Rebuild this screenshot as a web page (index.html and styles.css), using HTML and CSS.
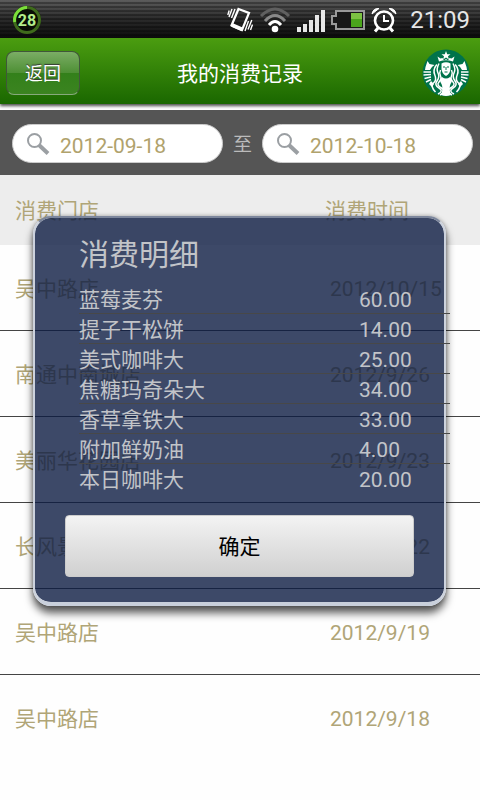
FILE: index.html
```html
<!DOCTYPE html>
<html lang="zh-CN">
<head>
<meta charset="utf-8">
<meta name="viewport" content="width=device-width, initial-scale=1">
<title>我的消费记录</title>
<link rel="stylesheet" href="styles.css">
</head>
<body>
<div class="status">
  <svg class="badge" width="30" height="30" viewBox="0 0 30 30" aria-hidden="true">
    <circle cx="15" cy="15" r="14" fill="#0a0d06"/>
    <circle cx="15" cy="15" r="12.500" fill="none" stroke="#3f6b1c" stroke-width="3"/>
    <path d="M2.700 17A12.500 12.500 0 0 1 15 2.500" fill="none" stroke="#7be03a" stroke-width="3"/>
    <text class="badge-text" x="15" y="21" text-anchor="middle">28</text>
  </svg>
  <div class="status-icons">
    <svg width="26" height="26" viewBox="0 0 26 26" fill="none" stroke="#fff" aria-hidden="true">
      <path d="M11.500 2L22 6L15 23L4.500 18.500Z" stroke-width="2.200"/>
      <path d="M5 18L15.500 22.500" stroke-width="4"/>
      <path d="M8 2L4.500 11M5 2L2 10M2.200 3.500L.8 8M24.800 13L21 22.500M25.500 17.500L23.500 23M21.500 14L18 24" stroke-width="1.400"/>
    </svg>
    <svg width="32" height="26" viewBox="0 0 32 26" fill="none" aria-hidden="true">
      <path d="M2 9Q16-5 30 9" stroke="#606060" stroke-width="3"/>
      <path d="M6 14Q16 3 26 14" stroke="#888" stroke-width="3"/>
      <path d="M10 18Q16 11 22 18" stroke="#fff" stroke-width="3"/>
      <circle cx="16" cy="22" r="3.300" fill="#fff"/>
    </svg>
    <svg width="28" height="26" viewBox="0 0 28 26" fill="#e8e8e8" aria-hidden="true">
      <path d="M0 20h4v5H0zM6 17h4v8H6zM12 13h4v12h-4zM18 8h4v17h-4zM24 3h4v22h-4z"/>
    </svg>
    <svg width="34" height="26" viewBox="0 0 34 26" aria-hidden="true">
      <path d="M5 4H33V22H5V17H1V9H5Z" fill="#181818" stroke="#999" stroke-width="2"/>
      <path d="M20 6H31V20H20Z" fill="#4ba51c"/><path d="M20 6H31V12H20Z" fill="#7cc243"/>
    </svg>
    <svg width="26" height="26" viewBox="0 0 26 26" fill="none" stroke="#fff" aria-hidden="true">
      <circle cx="13" cy="13.500" r="9" stroke-width="2.600"/>
      <path d="M13 8V14H18" stroke-width="2"/>
      <path d="M7.500 20.500L4 24.500M18.500 20.500L22 24.500" stroke-width="3"/>
      <path d="M1 7Q2 1 8 1.500ZM25 7Q24 1 18 1.500Z" fill="#fff" stroke-width="1"/>
    </svg>
  </div>
  <time class="clock">21:09</time>
</div>
<header class="header">
  <button class="back" type="button">返回</button>
  <h1 class="title">我的消费记录</h1>
  <svg class="logo" width="48" height="48" viewBox="0 0 48 48" aria-hidden="true">
    <circle cx="24" cy="24" r="23.500" fill="#00734b"/>
    <g fill="#fff">
      <path d="M24 2L25.200 5.200H28.500L26 7.200L26.900 10.400L24 8.500L21.100 10.400L22 7.200L19.500 5.200H22.800Z"/>
      <path d="M15.500 7.500L18.500 9.500L20.500 9L22 11.500L24 10L26 11.500L27.500 9L29.500 9.500L32.500 7.500L31 12.500Q24 10 17 12.500Z"/>
      <path d="M19.500 14.500Q24 12 28.500 14.500V20Q28 25 24 27Q20 25 19.500 20Z"/>
      <path d="M20 28Q24 31 28 28Q31.500 31 28.500 35Q26.500 39 29 46Q24 48 19 46Q21.500 39 19.500 35Q16.500 31 20 28Z"/>
      <path d="M3.500 18L5.500 12L7.500 15L12.500 16Q9 18 8 21L3 21ZM44.500 18L42.500 12L40.500 15L35.500 16Q39 18 40 21L45 21Z"/>
      <path d="M7 35L9 32L12 35L10 38ZM41 35L39 32L36 35L38 38Z"/>
    </g>
    <g fill="none" stroke="#fff" stroke-width="1.500">
      <path d="M17 14.500Q14 20 16 24T15 32T17 39T16 45M31 14.500Q34 20 32 24T33 32T31 39T32 45"/>
      <path d="M14.800 15.500Q10.500 21 12.800 26T11.500 34T13.500 43M33.200 15.500Q37.500 21 35.200 26T36.500 34T34.500 43"/>
      <path d="M18.500 21Q17 24 18.500 27T17 33T19.500 39T18 46M29.500 21Q31 24 29.500 27T31 33T28.500 39T30 46"/>
      <path d="M1.500 23L9 23M1.500 26L9 25.500M2.500 29.500L9 28M4 33L9 30.500M46.500 23L39 23M46.500 26L39 25.500M45.500 29.500L39 28M44 33L39 30.500"/>
    </g>
    <path d="M21 18H23M25 18H27M24 18V21M22.500 23H25.500" fill="none" stroke="#00734b" stroke-width="1"/>
  </svg>
</header>
<form class="filter">
  <label class="pill">
    <svg class="lens" width="24" height="24" viewBox="0 0 24 24" fill="none" stroke="#9b9fa3" aria-hidden="true"><circle cx="8.500" cy="8.500" r="6.500" stroke-width="2"/><path d="M13 13L22 21.500" stroke-width="4"/></svg>
    <input class="date" type="text" value="2012-09-18" aria-label="开始日期">
  </label>
  <span class="to">至</span>
  <label class="pill">
    <svg class="lens" width="24" height="24" viewBox="0 0 24 24" fill="none" stroke="#9b9fa3" aria-hidden="true"><circle cx="8.500" cy="8.500" r="6.500" stroke-width="2"/><path d="M13 13L22 21.500" stroke-width="4"/></svg>
    <input class="date" type="text" value="2012-10-18" aria-label="结束日期">
  </label>
</form>
<main class="content">
  <table class="records">
    <thead><tr><th class="store">消费门店</th><th>消费时间</th></tr></thead>
    <tbody>
      <tr><td>吴中路店</td><td class="day">2012/10/15</td></tr>
      <tr><td>南通中南城店</td><td class="day">2012/9/26</td></tr>
      <tr><td>美丽华花园店</td><td class="day">2012/9/23</td></tr>
      <tr><td>长风景畔店</td><td class="day">2012/9/22</td></tr>
      <tr><td>吴中路店</td><td class="day">2012/9/19</td></tr>
      <tr><td>吴中路店</td><td class="day">2012/9/18</td></tr>
    </tbody>
  </table>
  <section class="dialog" role="dialog" aria-labelledby="detail-title">
    <h2 class="dialog-title" id="detail-title">消费明细</h2>
    <table class="items">
      <tbody>
        <tr><td>蓝莓麦芬</td><td class="price">60.00</td></tr>
        <tr><td>提子干松饼</td><td class="price">14.00</td></tr>
        <tr><td>美式咖啡大</td><td class="price">25.00</td></tr>
        <tr><td>焦糖玛奇朵大</td><td class="price">34.00</td></tr>
        <tr><td>香草拿铁大</td><td class="price">33.00</td></tr>
        <tr><td>附加鲜奶油</td><td class="price">4.00</td></tr>
        <tr><td>本日咖啡大</td><td class="price">20.00</td></tr>
      </tbody>
    </table>
    <button class="confirm" type="button">确定</button>
  </section>
</main>
</body>
</html>
```
FILE: styles.css
```css
* { box-sizing: border-box; }
body {
  margin: 0;
  background: #fefefe;
  color: #b0a577;
  font: 21px/30px Roboto, "Noto Sans CJK SC", sans-serif;
}
button, input { font: inherit; }

.status {
  display: flex;
  align-items: center;
  height: 38px;
  padding: 2px 10px 0 12px;
  background:
    repeating-linear-gradient(transparent 0 2px, rgba(0, 0, 0, .3) 2px 4px),
    linear-gradient(#5c5c5c, #2b2b2b 50%, #0c0c0c);
}
.badge-text { font: bold 16px Roboto, sans-serif; fill: #b5ee8c; }
.status-icons { display: flex; gap: 6px; margin-left: auto; }
.clock { margin-left: 13px; color: #e6e6e6; font-size: 24px; }

.header {
  display: flex;
  align-items: center;
  justify-content: space-between;
  position: relative;
  height: 66px;
  padding: 4px 10px 0 6px;
  background: linear-gradient(#4b9d10, #1a6700);
  box-shadow: 0 2px 3px rgba(0, 0, 0, .7);
}
.back {
  width: 74px;
  height: 44px;
  padding: 2px 0 0;
  border: 1px solid #40573a;
  border-bottom-color: #87a97c;
  border-radius: 8px;
  background: linear-gradient(#7bad65, #4d8f34 50%, #33801a 50%, #3b8420);
  color: #fff;
  font-size: 18px;
  text-shadow: 0 -1px 1px #333;
}
.title {
  position: absolute;
  inset: 21px 80px auto;
  margin: 0;
  color: #fff;
  font-size: 21px;
  font-weight: 400;
  text-align: center;
}
.logo { display: block; }

.filter {
  display: flex;
  align-items: center;
  gap: 10px;
  height: 65px;
  margin-top: 6px;
  padding: 2px 7px 0 12px;
  background: #555;
}
.pill {
  display: flex;
  flex: 1;
  align-items: center;
  gap: 10px;
  min-width: 0;
  height: 39px;
  padding: 0 13px;
  border: 1px solid #ccc;
  border-radius: 20px;
  background: #fff;
}
.lens { flex: none; }
.date {
  flex: 1;
  min-width: 0;
  padding: 4px 0 0;
  border: 0;
  background: none;
  color: #b0a26c;
}
.to { padding-top: 2px; color: #bbb; font-size: 19px; }

.content { position: relative; }
.records { width: 100%; border-spacing: 0; }
.records th {
  height: 70px;
  padding: 2px 0 0;
  background: #ededed;
  font-weight: 400;
  text-align: left;
}
.records td {
  height: 86px;
  padding: 2px 0 0 15px;
  border-bottom: 1px solid #444;
}
.records tr:last-child td { border-bottom: 0; }
.records .store { width: 325px; padding-left: 15px; }
.records .day { padding-left: 5px; }

.dialog {
  position: absolute;
  inset: 41px 34px auto 33px;
  padding: 22px 30px 25px;
  border: 2px solid #ccd2dd;
  border-top-color: #7c869c;
  border-bottom: 4px solid #c9d0dc;
  border-radius: 18px;
  background: rgba(12, 27, 66, .8);
  background-clip: padding-box;
  box-shadow: 0 0 4px rgba(0, 0, 0, .3), 0 7px 8px rgba(0, 0, 0, .65);
  color: #c2c4c8;
}
.dialog-title {
  margin: 0 14px;
  padding-bottom: 14px;
  font-size: 30px;
  font-weight: 400;
}
.items {
  width: calc(100% + 22px);
  margin-left: 14px;
  border-spacing: 0;
}
.items td { height: 30px; padding: 4px 0 0; border-bottom: 1px solid #484848; line-height: 25px; }
.items tr:last-child td { border-bottom-color: transparent; }
.items .price { width: 91px; }
.confirm {
  display: block;
  width: 100%;
  height: 62px;
  margin-top: 21px;
  padding: 2px 0 0;
  border: 1px solid #ccc;
  border-radius: 4px;
  background: linear-gradient(#f3f3f3, #d0d0d0);
  color: #000;
}
```
